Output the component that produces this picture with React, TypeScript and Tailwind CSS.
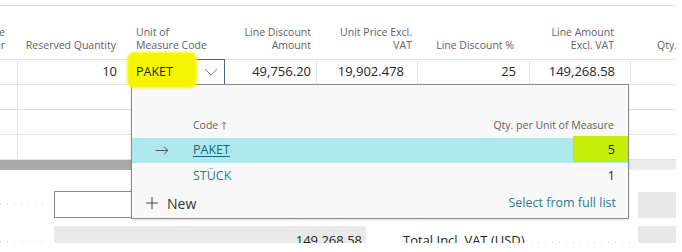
import React from "react";

type Col = { w: number; lines: string[]; align: "left" | "right"; pad: number };

const cols: Col[] = [
  { w: 18, lines: ["Qty. to Assemble", "to Order"], align: "right", pad: 13 },
  { w: 113, lines: ["Reserved Quantity"], align: "right", pad: 15 },
  { w: 94, lines: ["Unit of", "Measure Code"], align: "left", pad: 5 },
  { w: 92, lines: ["Line Discount", "Amount"], align: "right", pad: 6 },
  { w: 101, lines: ["Unit Price Excl.", "VAT"], align: "right", pad: 6 },
  { w: 112, lines: ["Line Discount %"], align: "right", pad: 16 },
  { w: 101, lines: ["Line Amount", "Excl. VAT"], align: "right", pad: 17 },
  { w: 45, lines: ["Qty. to Ship"], align: "left", pad: 26 },
];

function Leader({ className = "" }: { className?: string }) {
  return (
    <div
      className={
        "h-[1px] bg-[linear-gradient(to_right,#c4c4c4_1px,transparent_1px)] bg-[length:7px_1px] bg-repeat-x " +
        className
      }
    />
  );
}

export default function App() {
  return (
    <div className="relative w-[682px] h-[252px] bg-white overflow-hidden font-['Open_Sans',sans-serif]">
      <div className="w-[676px] h-[243px] overflow-hidden">
        <div className="h-[5px]" />
        {/* table */}
        <div className="border-t border-[#e3e3e3]">
          {/* header */}
          <div className="flex h-[53px]">
            {cols.map((c, i) => (
              <div
                key={i}
                className="flex flex-col justify-end pb-[7px] overflow-hidden text-[10.5px] leading-[13px] text-[#616161] whitespace-nowrap"
                style={{
                  width: c.w,
                  paddingRight: c.align === "right" ? c.pad : 0,
                  paddingLeft: c.align === "left" ? c.pad : 0,
                }}
              >
                {c.lines.map((l, j) => (
                  <div key={j} className={c.align === "right" ? "flex justify-end" : "flex justify-start"}>
                    <span className="shrink-0">{l}</span>
                  </div>
                ))}
              </div>
            ))}
          </div>
          {/* body */}
          <div className="border-t border-[#e3e3e3] text-[13px] text-[#262626]">
            {/* row 1 */}
            <div className="flex h-[25px] border-b border-[#e3e3e3]">
              <div className="w-[18px] border-r border-[#e3e3e3]" />
              <div className="w-[113px] flex items-center justify-end pr-[14px]">10</div>
              <div className="w-[94px] flex items-center justify-between pl-[4px] pr-[6px] border border-[#4b6b8d] -mt-[1px] h-[26px]">
                <span className="relative z-50 text-[12.5px] text-[#1f1f1f]">PAKET</span>
                <svg width="14" height="8" viewBox="0 0 14 8" className="shrink-0">
                  <polyline points="1,1 7,7 13,1" fill="none" stroke="#8a8a8a" strokeWidth="1" />
                </svg>
              </div>
              <div className="w-[92px] flex items-center justify-end pr-[5px] border-r border-[#e3e3e3]">49,756.20</div>
              <div className="w-[101px] flex items-center justify-end pr-[13px] border-r border-[#e3e3e3]">19,902.478</div>
              <div className="w-[112px] flex items-center justify-end pr-[13px] border-r border-[#e3e3e3]">25</div>
              <div className="w-[101px] flex items-center justify-end pr-[15px] border-r border-[#e3e3e3]">149,268.58</div>
              <div className="flex-1" />
            </div>
            {[0, 1, 2].map((r) => (
              <div key={r} className="flex h-[25px] border-b border-[#e3e3e3]">
                <div className="w-[18px] border-r border-[#e3e3e3]" />
                <div className="flex-1" />
              </div>
            ))}
          </div>
          {/* horizontal scrollbar */}
          <div className="flex h-[10px] bg-[#ececec]">
            <div className="w-[520px] bg-[#a9a9a9]" />
          </div>
        </div>

        {/* totals */}
        <div className="text-[13px] text-[#262626]">
          <div className="flex items-center mt-[21px] h-[27px]">
            <Leader className="w-[46px]" />
            <div className="ml-[8px] w-[312px] h-[27px] border border-[#8a8a8a] bg-white" />
            <div className="flex-1" />
            <div className="ml-[8px] w-[38px] h-[26px] bg-[#e8e8e8]" />
          </div>
          <div className="flex items-center mt-[8px] h-[30px]">
            <Leader className="w-[46px] mt-[1px]" />
            <div className="ml-[8px] w-[312px] h-[30px] bg-[#e9e9e9] flex items-center justify-end pr-[4px]">
              149,268.58
            </div>
            <div className="ml-[37px] whitespace-nowrap">Total Incl. VAT (USD)</div>
            <Leader className="ml-[6px] flex-1 mt-[2px]" />
            <div className="ml-[8px] w-[38px] h-[30px] bg-[#e8e8e8]" />
          </div>
        </div>
      </div>

      {/* yellow highlighter over PAKET */}
      <div className="absolute left-[127px] top-[52px] w-[70px] h-[36px] bg-[#f6f500] rounded-[7px] blur-[1px] z-40" />

      {/* dropdown popup */}
      <div className="absolute left-[131px] top-[84px] w-[498px] h-[135px] bg-[#f8f8f8] border border-[#8a8a8a] z-30 flex flex-col shadow-[0_1px_3px_rgba(0,0,0,0.12)]">
        <div className="h-[28px]" />
        <div className="h-[25px] flex items-center justify-between pl-[61px] pr-[14px] text-[10.5px] text-[#616161]">
          <span className="flex items-center gap-[3px]">
            Code
            <svg width="6" height="9" viewBox="0 0 6 9">
              <path d="M3 8.5 V1 M0.8 3.2 L3 1 L5.2 3.2" fill="none" stroke="#707070" strokeWidth="0.9" />
            </svg>
          </span>
          <span>Qty. per Unit of Measure</span>
        </div>
        <div className="relative h-[25px] bg-[#afe8ec] flex items-center text-[12.5px]">
          <div className="absolute right-0 top-[-2px] w-[55px] h-[26px] bg-[#c6ee0a]" />
          <svg width="14" height="9" viewBox="0 0 14 9" className="ml-[23px]">
            <path d="M0.5 4.5 H13 M9 0.8 L13 4.5 L9 8.2" fill="none" stroke="#5a5a5a" strokeWidth="1" />
          </svg>
          <span className="ml-[24px] text-[#14687f] underline underline-offset-[2px]">PAKET</span>
          <span className="relative ml-auto mr-[13px] text-[#262626]">5</span>
        </div>
        <div className="h-[26px] flex items-center text-[12.5px]">
          <span className="ml-[61px] text-[#2a7d8f]">STÜCK</span>
          <span className="ml-auto mr-[13px] text-[#262626]">1</span>
        </div>
        <div className="flex-1 flex items-center pb-[1px]">
          <svg width="14" height="14" viewBox="0 0 14 14" className="ml-[13px]">
            <path d="M7 1 V13 M1 7 H13" fill="none" stroke="#444" strokeWidth="1" />
          </svg>
          <span className="ml-[8px] text-[14px] text-[#333]">New</span>
          <span className="ml-auto mr-[12px] text-[12.5px] text-[#2a7d8f]">Select from full list</span>
        </div>
      </div>
    </div>
  );
}
